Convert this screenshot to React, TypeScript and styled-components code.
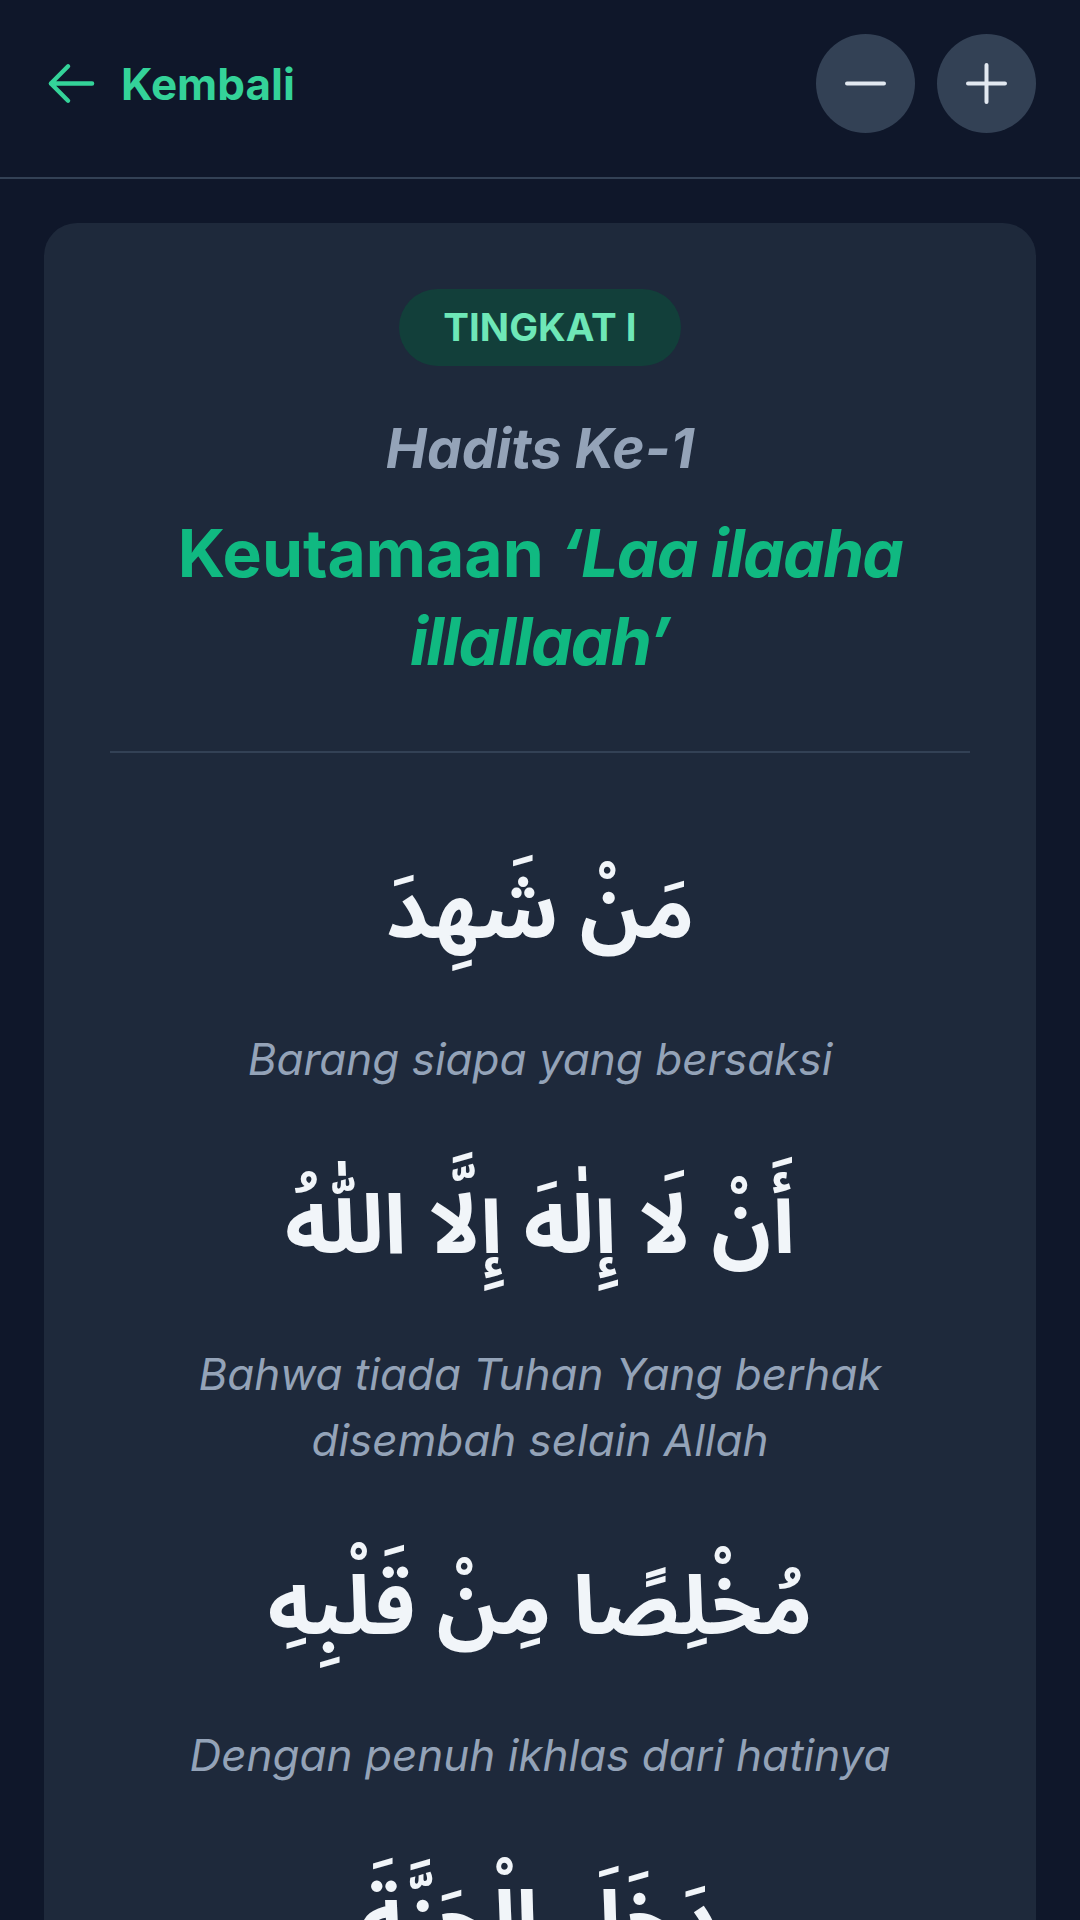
import React from "react";
import styled, { createGlobalStyle } from "styled-components";

const GlobalStyle = createGlobalStyle`
  html, body {
    margin: 0;
    padding: 0;
    background: #0f172a;
  }
  body {
    font-family: Inter, "Noto Sans", "DejaVu Sans", sans-serif;
    -webkit-font-smoothing: antialiased;
  }
  * { box-sizing: border-box; }
`;

const Page = styled.div`
  min-height: 100vh;
  background: #0f172a;
`;

const Header = styled.header`
  display: flex;
  align-items: center;
  justify-content: space-between;
  padding: 34px 44px 44px 44px;
  border-bottom: 2px solid #334155;
`;

const BackButton = styled.button`
  display: flex;
  align-items: center;
  gap: 22px;
  background: none;
  border: none;
  padding: 0;
  cursor: pointer;
  color: #34d399;
  font-family: Inter, sans-serif;
  font-size: 44px;
  font-weight: 700;
  line-height: 66px;
`;

const Controls = styled.div`
  display: flex;
  gap: 22px;
`;

const RoundButton = styled.button`
  width: 99px;
  height: 99px;
  border-radius: 50%;
  border: none;
  background: #334155;
  color: #e2e8f0;
  display: flex;
  align-items: center;
  justify-content: center;
  padding: 0;
  cursor: pointer;
`;

const Main = styled.main`
  padding: 44px;
`;

const Card = styled.article`
  background: #1e293b;
  border-radius: 33px;
  padding: 66px;
  display: flex;
  flex-direction: column;
  align-items: center;
  text-align: center;
`;

const Badge = styled.span`
  display: inline-block;
  padding: 11px 44px;
  border-radius: 999px;
  background: #123f3a;
  color: #6ee7b7;
  font-family: Inter, sans-serif;
  font-size: 38.5px;
  line-height: 55px;
  font-weight: 700;
`;

const Subtitle = styled.h2`
  margin: 44px 0 0 0;
  color: #94a3b8;
  font-family: Inter, sans-serif;
  font-size: 55px;
  line-height: 77px;
  font-style: italic;
  font-weight: 700;
`;

const Title = styled.h1`
  margin: 22px 0 0 0;
  color: #10b981;
  font-family: Inter, sans-serif;
  font-size: 66px;
  line-height: 88px;
  font-weight: 700;
  em {
    font-style: italic;
    margin-left: 16px;
    letter-spacing: -1.7px;
  }
`;

const Divider = styled.hr`
  align-self: stretch;
  border: none;
  height: 2px;
  background: #334155;
  margin: 66px 0 79px 0;
`;

const Verse = styled.div`
  display: flex;
  flex-direction: column;
  align-items: center;
  margin-bottom: 55px;
`;

const Arabic = styled.p`
  margin: 0 0 33px 0;
  direction: rtl;
  color: #f1f5f9;
  font-family: "Noto Sans Arabic", "DejaVu Sans", sans-serif;
  font-weight: 700;
  font-size: 82.5px;
  line-height: 161px;
`;

const Translation = styled.p`
  margin: 0;
  color: #94a3b8;
  font-family: Inter, sans-serif;
  font-style: italic;
  font-size: 44px;
  line-height: 66px;
`;

const ArrowLeftIcon = () => (
  <svg width="55" height="55" viewBox="0 0 24 24" fill="none" stroke="currentColor" strokeWidth="1.9" strokeLinecap="round" strokeLinejoin="round">
    <path d="M10.5 19.5 3 12m0 0 7.5-7.5M3 12h18" />
  </svg>
);

const MinusIcon = () => (
  <svg width="41" height="41" viewBox="0 0 41 41" fill="none" stroke="currentColor" strokeWidth="4" strokeLinecap="round">
    <path d="M2 20.5h37" />
  </svg>
);

const PlusIcon = () => (
  <svg width="41" height="41" viewBox="0 0 41 41" fill="none" stroke="currentColor" strokeWidth="4" strokeLinecap="round">
    <path d="M2 20.5h37M20.5 2v37" />
  </svg>
);

const verses = [
  { ar: "مَنْ شَهِدَ", id: "Barang siapa yang bersaksi" },
  { ar: "أَنْ لَا إِلٰهَ إِلَّا اللّٰهُ", id: "Bahwa tiada Tuhan Yang berhak disembah selain Allah" },
  { ar: "مُخْلِصًا مِنْ قَلْبِهِ", id: "Dengan penuh ikhlas dari hatinya" },
  { ar: "دَخَلَ الْجَنَّةَ", id: "Niscaya ia masuk surga" },
];

export default function App() {
  return (
    <Page>
      <GlobalStyle />
      <Header>
        <BackButton>
          <ArrowLeftIcon />
          Kembali
        </BackButton>
        <Controls>
          <RoundButton aria-label="Perkecil">
            <MinusIcon />
          </RoundButton>
          <RoundButton aria-label="Perbesar">
            <PlusIcon />
          </RoundButton>
        </Controls>
      </Header>
      <Main>
        <Card>
          <Badge>TINGKAT I</Badge>
          <Subtitle>Hadits Ke-1</Subtitle>
          <Title>
            Keutamaan<em>‘Laa ilaaha illallaah’</em>
          </Title>
          <Divider />
          {verses.map((v) => (
            <Verse key={v.id}>
              <Arabic lang="ar">{v.ar}</Arabic>
              <Translation>{v.id}</Translation>
            </Verse>
          ))}
        </Card>
      </Main>
    </Page>
  );
}
